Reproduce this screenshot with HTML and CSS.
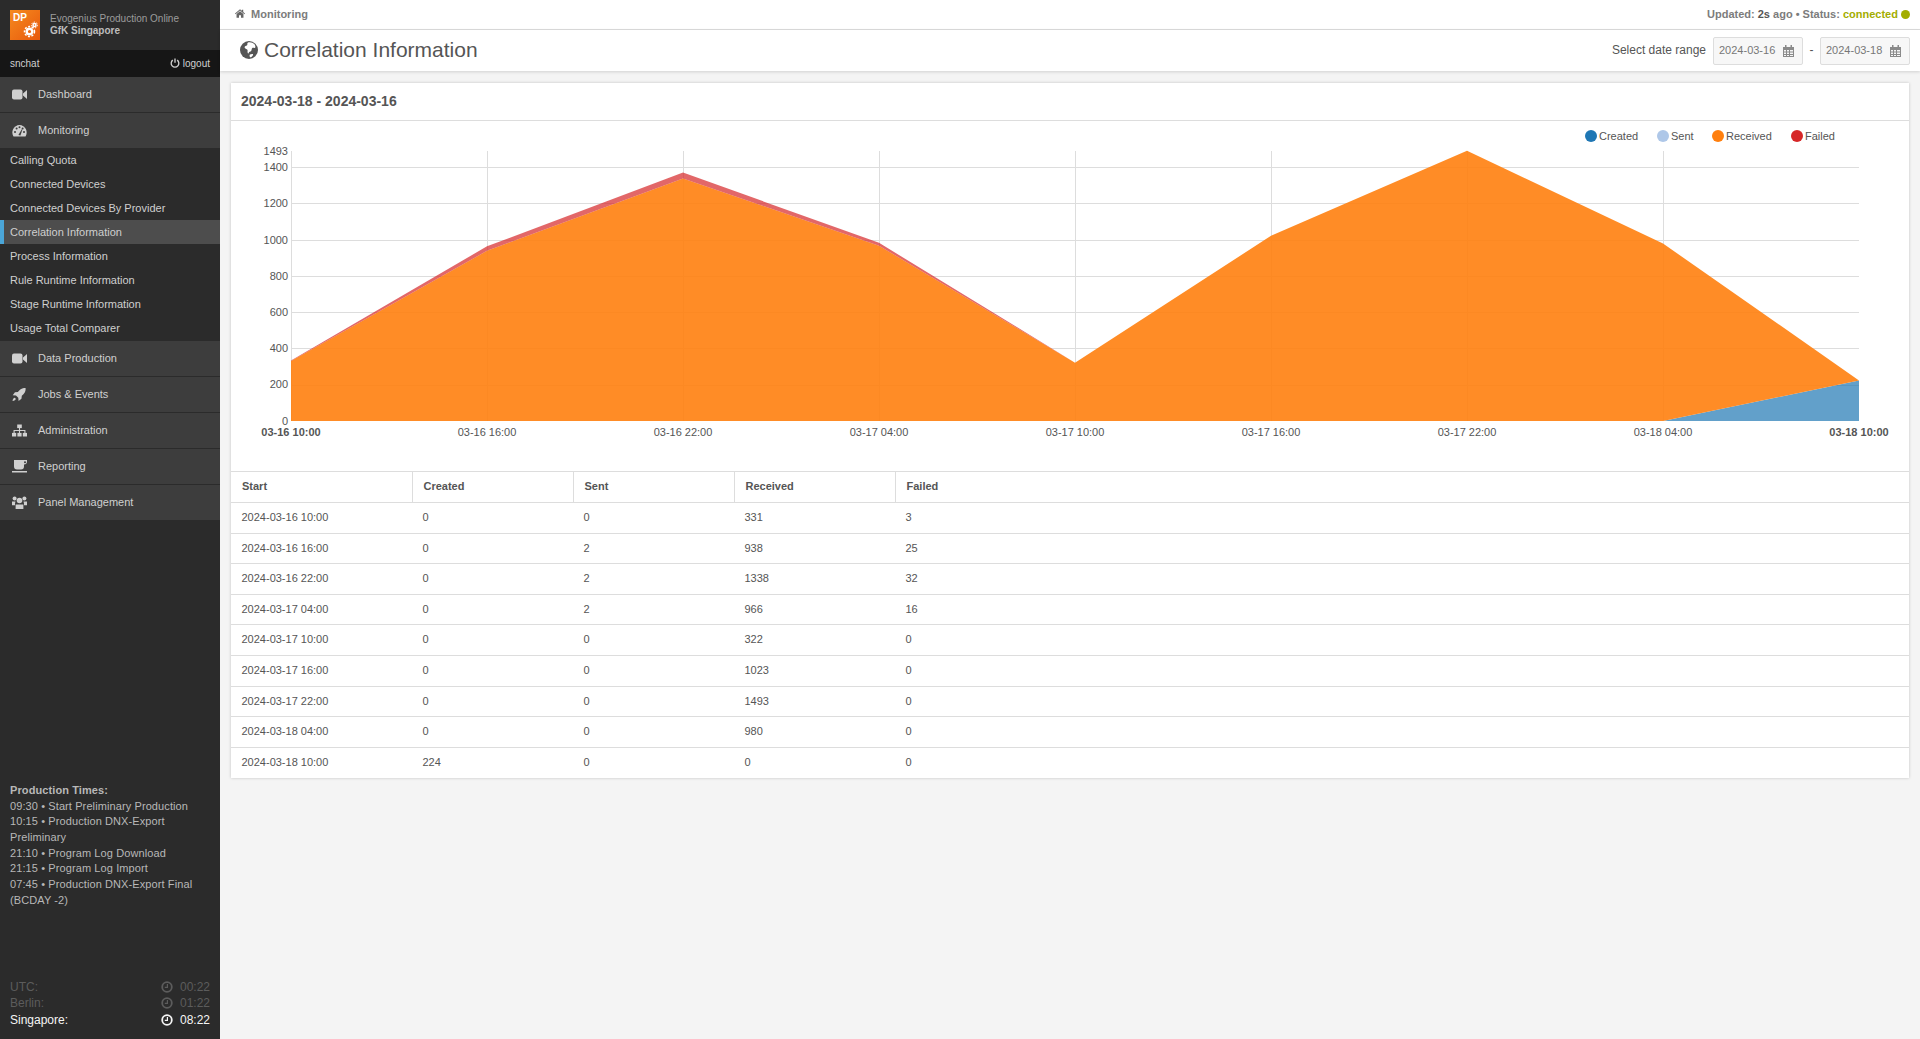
FILE: index.html
```html
<!DOCTYPE html>
<html lang="en">
<head>
    <meta charset="UTF-8">
    <title>Correlation Information</title>
    <link rel="stylesheet" href="styles.css">
</head>
<body>
    <aside class="sidebar">
        <div class="brand">
            <div class="logo">
                <span class="logo-text">DP</span>
                <svg class="logo-gears" viewBox="0 0 18 18">
                    <circle cx="9.500" cy="11.500" r="2.800" fill="none" stroke="#fff" stroke-width="2.400"/>
                    <circle cx="9.500" cy="11.500" r="5" fill="none" stroke="#fff" stroke-width="1.500" stroke-dasharray="2 1.600"/>
                    <circle cx="14.500" cy="5" r="1.500" fill="none" stroke="#fff" stroke-width="1.500"/>
                    <circle cx="14.500" cy="5" r="2.900" fill="none" stroke="#fff" stroke-width="1" stroke-dasharray="1.400 1.100"/>
                </svg>
            </div>
            <div class="brand-text">
                <div>Evogenius Production Online</div>
                <div class="brand-site">GfK Singapore</div>
            </div>
        </div>
        <div class="userbar">
            <span>snchat</span>
            <span class="logout">
                <svg class="icon-power" viewBox="0 0 12 12"><path d="M3.400 2.600a4.600 4.600 0 1 0 5.200 0" fill="none" stroke="currentColor" stroke-width="1.600"/><path d="M6 .6v5" stroke="currentColor" stroke-width="1.600"/></svg>
                logout
            </span>
        </div>
        <nav class="nav">
            <a class="nav-item">
                <svg class="nav-icon" viewBox="0 0 15 12"><rect x="0" y="1" width="10.500" height="10" rx="2"/><path d="M11 5l4-3.600v9.200L11 7z"/></svg>
                Dashboard
            </a>
            <a class="nav-item">
                <svg class="nav-icon" viewBox="0 0 15 12"><path d="M7.500 0.500a7.500 7.500 0 0 0-6 11.500h12a7.500 7.500 0 0 0-6-11.500z"/><g fill="#3d3d3d"><circle cx="3" cy="7.500" r="1"/><circle cx="4.600" cy="4" r="1"/><circle cx="7.500" cy="2.800" r="1"/><circle cx="12" cy="7.500" r="1"/><circle cx="10.600" cy="4" r="1"/><path d="M6.400 10.500L9.800 4.800l.6.3-2 6z"/></g></svg>
                Monitoring
            </a>
            <div class="subnav">
                <a class="subnav-item">Calling Quota</a>
                <a class="subnav-item">Connected Devices</a>
                <a class="subnav-item">Connected Devices By Provider</a>
                <a class="subnav-item active">Correlation Information</a>
                <a class="subnav-item">Process Information</a>
                <a class="subnav-item">Rule Runtime Information</a>
                <a class="subnav-item">Stage Runtime Information</a>
                <a class="subnav-item">Usage Total Comparer</a>
            </div>
            <a class="nav-item bordered">
                <svg class="nav-icon" viewBox="0 0 15 12"><rect x="0" y="1" width="10.500" height="10" rx="2"/><path d="M11 5l4-3.600v9.200L11 7z"/></svg>
                Data Production
            </a>
            <a class="nav-item bordered">
                <svg class="nav-icon" viewBox="0 0 15 14"><path d="M14 0c.5 3.500-1 6-4 8.400l-.4 3.200L6.500 14l-.3-3.500L3.700 8l-3.500-.2L2.600 4.700l3.200-.4C8 1.200 10.500-.3 14 0z"/><path d="M0 14c.2-2 1-3.300 2.500-3.500l1 1C3.300 13 2 13.800 0 14z"/></svg>
                Jobs &amp; Events
            </a>
            <a class="nav-item bordered">
                <svg class="nav-icon" viewBox="0 0 15 12"><rect x="5.200" y="0" width="4.600" height="3.600"/><rect x="0" y="8.400" width="4.200" height="3.600"/><rect x="5.400" y="8.400" width="4.200" height="3.600"/><rect x="10.800" y="8.400" width="4.200" height="3.600"/><path d="M2.100 8.400V6h10.800v2.400M7.500 3.600v4.800" fill="none" stroke="currentColor" stroke-width="1.100"/></svg>
                Administration
            </a>
            <a class="nav-item bordered">
                <svg class="nav-icon" viewBox="0 0 15 13"><path d="M2 0h13v1.500a3 3 0 0 1-3 3H12v2a3 3 0 0 1-3 3H5a3 3 0 0 1-3-3z"/><circle cx="13" cy="2.200" r="1" fill="#3d3d3d"/><rect x="0" y="11" width="15" height="1.500"/></svg>
                Reporting
            </a>
            <a class="nav-item bordered">
                <svg class="nav-icon" viewBox="0 0 15 13"><circle cx="7.500" cy="4.500" r="2.800"/><circle cx="2.600" cy="2.600" r="2"/><circle cx="12.400" cy="2.600" r="2"/><path d="M3.600 8.500h7.800V13H3.600z"/><path d="M0 5.500h3.500L3 7.500v1.800H0zM15 5.500h-3.500l.5 2v1.800h3z"/></svg>
                Panel Management
            </a>
        </nav>
        <div class="production">
            <div class="production-title">Production Times:</div>
            <div>09:30 &bull; Start Preliminary Production</div>
            <div>10:15 &bull; Production DNX-Export Preliminary</div>
            <div>21:10 &bull; Program Log Download</div>
            <div>21:15 &bull; Program Log Import</div>
            <div>07:45 &bull; Production DNX-Export Final (BCDAY -2)</div>
        </div>
        <div class="clocks">
            <div class="clock">
                <span>UTC:</span>
                <span class="clock-time"><svg class="icon-clock" viewBox="0 0 12 12"><circle cx="6" cy="6" r="4.800" fill="none" stroke="currentColor" stroke-width="1.800"/><path d="M6.400 3v3.400H3.800" fill="none" stroke="currentColor" stroke-width="1.200"/></svg>00:22</span>
            </div>
            <div class="clock">
                <span>Berlin:</span>
                <span class="clock-time"><svg class="icon-clock" viewBox="0 0 12 12"><circle cx="6" cy="6" r="4.800" fill="none" stroke="currentColor" stroke-width="1.800"/><path d="M6.400 3v3.400H3.800" fill="none" stroke="currentColor" stroke-width="1.200"/></svg>01:22</span>
            </div>
            <div class="clock current">
                <span>Singapore:</span>
                <span class="clock-time"><svg class="icon-clock" viewBox="0 0 12 12"><circle cx="6" cy="6" r="4.800" fill="none" stroke="currentColor" stroke-width="1.800"/><path d="M6.400 3v3.400H3.800" fill="none" stroke="currentColor" stroke-width="1.200"/></svg>08:22</span>
            </div>
        </div>
    </aside>

    <main class="main">
        <div class="topbar">
            <div class="crumb">
                <svg class="icon-home" viewBox="0 0 13 11"><path d="M6.500 0L0 5.600l.7.800L6.500 1.500l5.800 4.900.7-.8-2.300-2V.6H9v1.300z"/><path d="M2 6.300L6.500 2.600 11 6.300V11H7.800V7.800H5.200V11H2z"/></svg>
                Monitoring
            </div>
            <div class="status">
                Updated: <b>2s</b> ago &bull; Status: <span class="connected">connected</span>
                <span class="status-dot"></span>
            </div>
        </div>
        <div class="page-head">
            <h1 class="page-title">
                <svg class="icon-globe" viewBox="0 0 18 18"><circle cx="9" cy="9" r="9" fill="#555"/><path d="M8 1.500c2-.8 5 0 6.500 1.800 1 1.300 1.200 2.800.5 3.500-.8.600-1.800-.4-2.700.2-1 .8-.3 2-1.200 3-.8.800-2 .6-2.300 1.800-.2 1-1 .6-1.200-.3-.3-1.300.5-2.300-.5-3-1.200-.7-2.500-1-2.500-2.200 0-1.300 1.500-1.200 2.500-2 .6-.5 0-1.500.3-2z" fill="#fff"/><path d="M10 13.500c1-.5 2.500-.8 3-.2.400.6-.4 2-1.600 2.700-1 .6-1.700 0-1.800-1-.1-.7 0-1.200.4-1.500z" fill="#fff"/></svg>
                Correlation Information
            </h1>
            <div class="date-range">
                <span class="date-label">Select date range</span>
                <div class="date-input">2024-03-16
                    <svg class="icon-calendar" viewBox="0 0 11 12"><path d="M0 2h11v10H0z" fill="#8a8a8a"/><path d="M2 0h1.500v3H2zM7.500 0H9v3H7.500z" fill="#8a8a8a"/><path d="M1 5h2v1.500H1zM4 5h2v1.500H4zM7 5h3v1.500H7zM1 7.500h2V9H1zM4 7.500h2V9H4zM7 7.500h3V9H7zM1 10h2v1H1zM4 10h2v1H4zM7 10h3v1H7z" fill="#f5f5f5"/></svg>
                </div>
                <span class="date-sep">-</span>
                <div class="date-input">2024-03-18
                    <svg class="icon-calendar" viewBox="0 0 11 12"><path d="M0 2h11v10H0z" fill="#8a8a8a"/><path d="M2 0h1.500v3H2zM7.500 0H9v3H7.500z" fill="#8a8a8a"/><path d="M1 5h2v1.500H1zM4 5h2v1.500H4zM7 5h3v1.500H7zM1 7.500h2V9H1zM4 7.500h2V9H4zM7 7.500h3V9H7zM1 10h2v1H1zM4 10h2v1H4zM7 10h3v1H7z" fill="#f5f5f5"/></svg>
                </div>
            </div>
        </div>

        <section class="card">
            <h2 class="card-title">2024-03-18 - 2024-03-16</h2>
            <svg class="chart" viewBox="231 121 1678 350">
                <!-- legend -->
                <circle cx="1591" cy="136" r="6" class="dot-created"/>
                <text x="1599" y="140" class="chart-text">Created</text>
                <circle cx="1663" cy="136" r="6" class="dot-sent"/>
                <text x="1671" y="140" class="chart-text">Sent</text>
                <circle cx="1718" cy="136" r="6" class="dot-received"/>
                <text x="1726" y="140" class="chart-text">Received</text>
                <circle cx="1797" cy="136" r="6" class="dot-failed"/>
                <text x="1805" y="140" class="chart-text">Failed</text>

                <!-- grid -->
                <g class="grid">
                    <path d="M291 167.500H1859M291 203.500H1859M291 240.500H1859M291 276.500H1859M291 312.500H1859M291 348.500H1859M291 385.500H1859"/>
                    <path d="M291.500 151V421M487.500 151V421M683.500 151V421M879.500 151V421M1075.500 151V421M1271.500 151V421M1467.500 151V421M1663.500 151V421"/>
                </g>

                <!-- stacked areas: created, received, failed -->
                <polygon class="area-created" points="291,421 1663,421 1859,380.400 1859,421"/>
                <polygon class="area-received" points="291,361.100 487,250.800 683,178.400 879,245.700 1075,362.700 1271,235.800 1467,150.700 1663,243.500 1859,380.400 1663,421 291,421"/>
                <polygon class="area-failed" points="291,360.500 487,246.300 683,172.600 879,242.800 1075,362.700 879,245.700 683,178.400 487,250.800 291,361.100"/>

                <!-- y axis -->
                <g class="chart-text axis-y">
                    <text x="288" y="155">1493</text>
                    <text x="288" y="171">1400</text>
                    <text x="288" y="207">1200</text>
                    <text x="288" y="244">1000</text>
                    <text x="288" y="280">800</text>
                    <text x="288" y="316">600</text>
                    <text x="288" y="352">400</text>
                    <text x="288" y="388">200</text>
                    <text x="288" y="425">0</text>
                </g>
                <!-- x axis -->
                <g class="chart-text axis-x">
                    <text x="291" y="436" class="axis-end">03-16 10:00</text>
                    <text x="487" y="436">03-16 16:00</text>
                    <text x="683" y="436">03-16 22:00</text>
                    <text x="879" y="436">03-17 04:00</text>
                    <text x="1075" y="436">03-17 10:00</text>
                    <text x="1271" y="436">03-17 16:00</text>
                    <text x="1467" y="436">03-17 22:00</text>
                    <text x="1663" y="436">03-18 04:00</text>
                    <text x="1859" y="436" class="axis-end">03-18 10:00</text>
                </g>
            </svg>
            <table class="data-table">
                <thead>
                    <tr><th>Start</th><th>Created</th><th>Sent</th><th>Received</th><th>Failed</th></tr>
                </thead>
                <tbody>
                    <tr><td>2024-03-16 10:00</td><td>0</td><td>0</td><td>331</td><td>3</td></tr>
                    <tr><td>2024-03-16 16:00</td><td>0</td><td>2</td><td>938</td><td>25</td></tr>
                    <tr><td>2024-03-16 22:00</td><td>0</td><td>2</td><td>1338</td><td>32</td></tr>
                    <tr><td>2024-03-17 04:00</td><td>0</td><td>2</td><td>966</td><td>16</td></tr>
                    <tr><td>2024-03-17 10:00</td><td>0</td><td>0</td><td>322</td><td>0</td></tr>
                    <tr><td>2024-03-17 16:00</td><td>0</td><td>0</td><td>1023</td><td>0</td></tr>
                    <tr><td>2024-03-17 22:00</td><td>0</td><td>0</td><td>1493</td><td>0</td></tr>
                    <tr><td>2024-03-18 04:00</td><td>0</td><td>0</td><td>980</td><td>0</td></tr>
                    <tr><td>2024-03-18 10:00</td><td>224</td><td>0</td><td>0</td><td>0</td></tr>
                </tbody>
            </table>
        </section>
    </main>
</body>
</html>
```

FILE: styles.css
```css
* {
    box-sizing: border-box;
}

body {
    margin: 0;
    display: flex;
    min-height: 100vh;
    background: #f4f4f4;
    color: #555;
    font-family: "Liberation Sans", Arial, sans-serif;
    font-size: 11px;
    line-height: 1.42857;
}

/* sidebar */
.sidebar {
    width: 220px;
    flex-shrink: 0;
    display: flex;
    flex-direction: column;
    background: #2b2b2b;
    color: #c4c4c4;
}

.brand {
    height: 50px;
    display: flex;
    align-items: center;
    gap: 10px;
    padding-left: 10px;
}

.logo {
    position: relative;
    width: 30px;
    height: 30px;
    background: linear-gradient(135deg, #f58a1f, #e8590c);
}

.logo-text {
    position: absolute;
    left: 3px;
    top: 1px;
    color: #fff;
    font-size: 10px;
    font-weight: bold;
}

.logo-gears {
    position: absolute;
    right: 2px;
    bottom: 2px;
    width: 18px;
    height: 18px;
}

.brand-text {
    font-size: 10px;
    color: #9c9c9c;
    line-height: 12px;
}

.brand-site {
    font-weight: bold;
    color: #bdbdbd;
}

.userbar {
    height: 27px;
    display: flex;
    align-items: center;
    justify-content: space-between;
    padding: 1px 10px 0;
    background: #161616;
    color: #d0d0d0;
    font-size: 10px;
}

.icon-power {
    width: 10px;
    height: 10px;
    vertical-align: -1px;
}

.nav-item {
    height: 35px;
    display: flex;
    align-items: center;
    gap: 11px;
    padding-left: 12px;
    background: #3d3d3d;
    color: #d0d0d0;
}

.nav-item + .nav-item {
    height: 36px;
    border-top: 1px solid #2b2b2b;
}

.nav-item.bordered {
    height: 36px;
    border-top: 1px solid #2b2b2b;
}

.nav-icon {
    width: 15px;
    height: 13px;
    fill: currentColor;
    flex-shrink: 0;
}

.subnav-item {
    display: block;
    height: 24px;
    line-height: 24px;
    padding-left: 10px;
    color: #cfcfcf;
}

.subnav-item.active {
    background: #4d4d4d;
    border-left: 4px solid #4ba6d8;
    padding-left: 6px;
}

.production {
    margin-top: auto;
    padding: 0 10px;
    color: #b8b8b8;
    letter-spacing: 0.1px;
}

.production-title {
    font-weight: bold;
}

.clocks {
    margin-top: 70px;
    padding: 0 10px 11px;
    font-size: 12px;
    line-height: 16.500px;
    color: #5c5c5c;
}

.clock {
    display: flex;
    justify-content: space-between;
}

.clock.current {
    color: #f5f5f5;
}

.clock-time {
    display: flex;
    align-items: center;
    gap: 7px;
}

.icon-clock {
    width: 12px;
    height: 12px;
}

/* main area */
.main {
    flex: 1;
    min-width: 0;
}

.topbar {
    height: 30px;
    display: flex;
    align-items: center;
    justify-content: space-between;
    padding: 0 10px 0 15px;
    background: #fff;
    border-bottom: 1px solid #ddd;
    font-weight: bold;
    color: #7c7c7c;
}

.icon-home {
    width: 10px;
    height: 9px;
    fill: #666;
    margin-right: 3px;
}

.status b {
    color: #555;
}

.connected {
    color: #a3ad00;
}

.status-dot {
    display: inline-block;
    width: 9px;
    height: 9px;
    border-radius: 50%;
    background: #a3ad00;
    vertical-align: -1px;
}

.page-head {
    height: 41px;
    display: flex;
    align-items: center;
    justify-content: space-between;
    padding: 0 10px 0 20px;
    background: #fff;
    box-shadow: 0 1px 3px rgba(0, 0, 0, 0.15);
}

.page-title {
    margin: 0 0 2px;
    display: flex;
    align-items: center;
    gap: 6px;
    font-size: 21px;
    font-weight: normal;
    line-height: 1;
}

.icon-globe {
    width: 18px;
    height: 18px;
}

.date-range {
    display: flex;
    align-items: center;
}

.date-label {
    font-size: 12px;
    margin-right: 7px;
}

.date-input {
    width: 90px;
    height: 28px;
    display: flex;
    align-items: center;
    justify-content: space-between;
    padding: 0 8px 0 5px;
    background: #f7f7f7;
    border: 1px solid #ddd;
    border-radius: 2px;
    color: #777;
}

.date-sep {
    width: 17px;
    text-align: center;
    font-size: 12px;
}

.icon-calendar {
    width: 11px;
    height: 12px;
}

/* card */
.card {
    margin: 12px 11px 0;
    background: #fff;
    box-shadow: 0 0 3px rgba(0, 0, 0, 0.2);
}

.card-title {
    margin: 0;
    height: 38px;
    line-height: 37px;
    padding-left: 10px;
    font-size: 14px;
    font-weight: bold;
    border-bottom: 1px solid #ddd;
}

.chart {
    display: block;
    width: 1678px;
    height: 350px;
}

.chart-text {
    font-family: "Liberation Sans", Arial, sans-serif;
    font-size: 11px;
    fill: #555;
}

.axis-y text {
    text-anchor: end;
}

.axis-x text {
    text-anchor: middle;
}

.axis-x .axis-end {
    font-weight: bold;
}

.dot-created {
    fill: #1f77b4;
}

.dot-sent {
    fill: #aec7e8;
}

.dot-received {
    fill: #ff7f0e;
}

.dot-failed {
    fill: #d62728;
}

.grid path {
    fill: none;
    stroke: #ddd;
    stroke-width: 1;
}

.area-created {
    fill: #1f77b4;
    fill-opacity: 0.7;
}

.area-received {
    fill: #ff7f0e;
    fill-opacity: 0.9;
}

.area-failed {
    fill: #d62728;
    fill-opacity: 0.7;
}

.data-table {
    width: 100%;
    border-collapse: collapse;
    table-layout: fixed;
}

.data-table th {
    height: 31px;
    padding: 0 10px 0 11px;
    text-align: left;
    font-weight: bold;
    border-top: 1px solid #ddd;
    border-right: 1px solid #ddd;
    width: 161px;
}

.data-table th:first-child {
    width: 181px;
}

.data-table th:last-child {
    width: auto;
    border-right: 0;
}

.data-table td {
    height: 30.600px;
    padding: 0 10px 0 10.500px;
    border-top: 1px solid #ddd;
}
```
